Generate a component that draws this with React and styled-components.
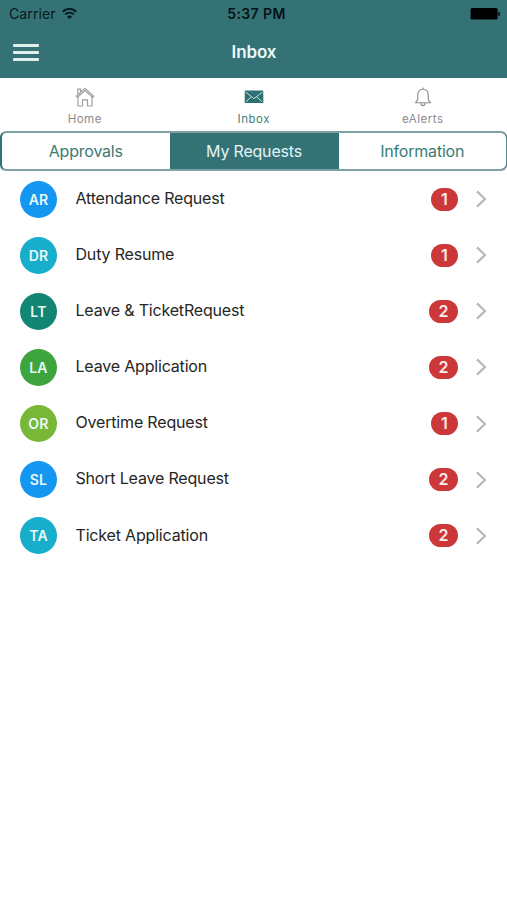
import React from 'react';
import styled, { createGlobalStyle } from 'styled-components';

const GlobalStyle = createGlobalStyle`
  * {
    box-sizing: border-box;
  }

  body {
    margin: 0;
    background: #fff;
    font-family: Inter, 'Liberation Sans', sans-serif;
    color: #262626;
    overflow-x: hidden;
  }

  svg {
    display: block;
  }
`;

const Screen = styled.div`
  min-height: 900px;
  background: #fff;
`;

const Header = styled.header`
  height: 78px;
  background: #347276;
`;

const StatusBar = styled.div`
  height: 27px;
  display: grid;
  grid-template-columns: 1fr auto 1fr;
  align-items: center;
  padding: 0 7px 0 9px;
  color: #07191c;
`;

const Carrier = styled.div`
  display: flex;
  align-items: center;
  gap: 6px;
  font-size: 14px;
  line-height: 18px;
  letter-spacing: 0.1px;
`;

const Clock = styled.div`
  padding-left: 4px;
  font-size: 14px;
  font-weight: 600;
  letter-spacing: 0.4px;
  color: #061215;
`;

const Battery = styled.svg`
  justify-self: end;
`;

const NavBar = styled.div`
  height: 50px;
  display: grid;
  grid-template-columns: 1fr auto 1fr;
  align-items: center;
  padding: 0 13px;
`;

const MenuButton = styled.button`
  width: 26px;
  height: 17px;
  display: flex;
  flex-direction: column;
  justify-content: space-between;
  padding: 0;
  border: none;
  background: none;

  & > span {
    height: 3px;
    border-radius: 1px;
    background: #e0eeee;
  }
`;

const Title = styled.h1`
  margin: 0;
  padding-left: 1px;
  font-size: 17px;
  font-weight: 600;
  letter-spacing: -0.1px;
  color: #edf9fa;
`;

const Tabs = styled.nav`
  height: 53px;
  display: grid;
  grid-template-columns: repeat(3, 1fr);
`;

const Tab = styled.a`
  display: flex;
  flex-direction: column;
  align-items: center;
  padding: 8px 0 0 0.5px;
  font-size: 11.5px;
  line-height: 16px;
  letter-spacing: 0.5px;
  color: ${(props) => (props.$active ? '#45807d' : '#8b8b8b')};

  & > svg {
    margin-bottom: 3px;
  }
`;

const Segments = styled.div`
  height: 40px;
  display: grid;
  grid-template-columns: 167.5px 169px 1fr;
  border: solid #7fa3a3;
  border-width: 2px 1px 2px 2px;
  border-left-color: #347276;
  border-right-color: #568788;
  border-radius: 6px;
  overflow: hidden;
  background: #347276;
`;

const Segment = styled.button`
  padding: 0 0 1px;
  border: none;
  font-family: inherit;
  font-size: 16px;
  letter-spacing: -0.2px;
  background: ${(props) => (props.$active ? '#347276' : '#fff')};
  color: ${(props) => (props.$active ? '#e2f5f5' : '#397c75')};

  &:first-child {
    border-radius: 4px 0 0 4px;
  }

  &:last-child {
    border-radius: 0 5px 5px 0;
  }
`;

const List = styled.ul`
  margin: 0;
  padding: 0;
  list-style: none;
`;

const Row = styled.li`
  height: 56.15px;
  display: flex;
  align-items: center;
  padding: 0 20px;
`;

const Avatar = styled.div`
  width: 37px;
  height: 37px;
  display: flex;
  align-items: center;
  justify-content: center;
  margin-right: 18.5px;
  border-radius: 50%;
  background: ${(props) => props.$color};
  color: #e8f9f8;
  font-size: 14px;
  font-weight: 600;
  letter-spacing: 0.2px;
`;

const Label = styled.span`
  flex: 1;
  padding-bottom: 2.6px;
  font-size: 16px;
  letter-spacing: -0.18px;
`;

const Badge = styled.span`
  min-width: 27px;
  height: 23px;
  padding: 0 9.5px;
  margin-right: 18px;
  border-radius: 12px;
  background: #cc373a;
  color: #fdeaea;
  font-size: 16px;
  font-weight: 600;
  line-height: 23px;
  text-align: center;
`;

const requests = [
  { code: 'AR', name: 'Attendance Request', count: 1, color: '#1496f1' },
  { code: 'DR', name: 'Duty Resume', count: 1, color: '#17aecb' },
  { code: 'LT', name: 'Leave & TicketRequest', count: 2, color: '#128672' },
  { code: 'LA', name: 'Leave Application', count: 2, color: '#3ea43e' },
  { code: 'OR', name: 'Overtime Request', count: 1, color: '#79b837' },
  { code: 'SL', name: 'Short Leave Request', count: 2, color: '#1496f1' },
  { code: 'TA', name: 'Ticket Application', count: 2, color: '#17aecb' },
];

function WifiIcon() {
  return (
    <svg width='15' height='12' viewBox='0 0 15 12' fill='none' stroke='#07191c' strokeWidth='2'>
      <path d='M0.8 3.7C4.6 -0.1 10.4 -0.1 14.2 3.7' />
      <path d='M3.3 6.4C5.7 4.1 9.3 4.1 11.7 6.4' />
      <path d='M7.5 11L4.9 8.4C6.4 7.1 8.6 7.1 10.1 8.4Z' fill='#07191c' stroke='none' />
    </svg>
  );
}

function HomeIcon() {
  return (
    <svg width='20' height='22' viewBox='0 0 20 22' fill='none' stroke='#a0a0a0' strokeWidth='1.2'>
      <path d='M1.3 10.2L10 2.2L18.7 10.2L17.6 11.4L10 4.6L2.4 11.4Z' />
      <path d='M3 11V20H7.5V13.8H12.5V20H17V11' />
      <path d='M2.8 8.6V3.2H5.6V6' />
    </svg>
  );
}

function MailIcon() {
  return (
    <svg width='20' height='22' viewBox='0 0 20 22'>
      <rect x='0.7' y='4.5' width='18.6' height='12.5' rx='0.6' fill='#2f7072' />
      <path
        d='M1.5 6L10 12.6L18.5 6M2 15.6L7.2 11M18 15.6L12.8 11'
        fill='none'
        stroke='#c4dcda'
        strokeWidth='1'
      />
    </svg>
  );
}

function BellIcon() {
  return (
    <svg width='20' height='22' viewBox='0 0 20 22' fill='none' stroke='#8c8c8c' strokeWidth='1.1'>
      <path d='M10 3.2C6.7 3.2 4.8 5.7 4.8 8.8V13.2C4.8 14.6 2.7 15.4 2.7 16.8H17.3C17.3 15.4 15.2 14.6 15.2 13.2V8.8C15.2 5.7 13.3 3.2 10 3.2Z' />
      <path d='M10 1.5V3.2M8 17C8 20.5 12 20.5 12 17' />
    </svg>
  );
}

function Chevron() {
  return (
    <svg width='11' height='18' viewBox='0 0 11 18' fill='none' stroke='#b8b8b8' strokeWidth='2.2'>
      <path d='M1 1.4L9 9L1 16.6' />
    </svg>
  );
}

function TopBar() {
  return (
    <Header>
      <StatusBar>
        <Carrier>
          <span>Carrier</span>
          <WifiIcon />
        </Carrier>
        <Clock>5:37 PM</Clock>
        <Battery width='30' height='12' viewBox='0 0 30 12'>
          <rect x='0.6' y='0' width='27' height='11.4' rx='1.5' />
          <rect x='28.3' y='4' width='1.5' height='4' rx='0.7' />
        </Battery>
      </StatusBar>
      <NavBar>
        <MenuButton aria-label='Menu'>
          <span />
          <span />
          <span />
        </MenuButton>
        <Title>Inbox</Title>
      </NavBar>
    </Header>
  );
}

function App() {
  return (
    <Screen>
      <GlobalStyle />
      <TopBar />
      <Tabs>
        <Tab>
          <HomeIcon />
          Home
        </Tab>
        <Tab $active>
          <MailIcon />
          Inbox
        </Tab>
        <Tab>
          <BellIcon />
          eAlerts
        </Tab>
      </Tabs>
      <Segments>
        <Segment>Approvals</Segment>
        <Segment $active>My Requests</Segment>
        <Segment>Information</Segment>
      </Segments>
      <List>
        {requests.map((item) => (
          <Row key={item.code}>
            <Avatar $color={item.color}>{item.code}</Avatar>
            <Label>{item.name}</Label>
            <Badge>{item.count}</Badge>
            <Chevron />
          </Row>
        ))}
      </List>
    </Screen>
  );
}

export default App;
